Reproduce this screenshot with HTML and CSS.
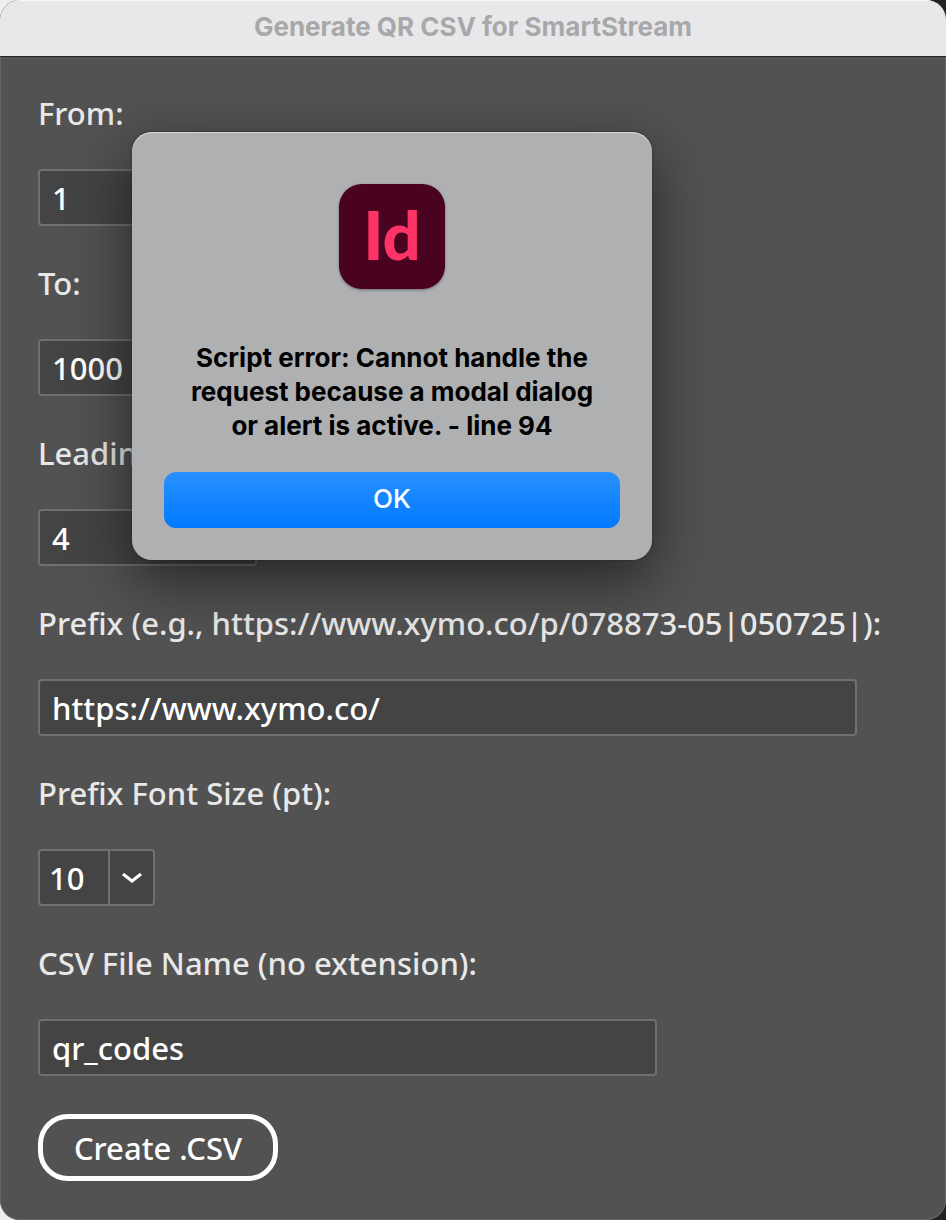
FILE: index.html
```html
<!DOCTYPE html>
<html lang="en">
<head>
    <meta charset="UTF-8">
    <meta name="viewport" content="width=device-width, initial-scale=1.0">
    <title>Generate QR CSV for SmartStream</title>
    <link rel="stylesheet" href="styles.css">
</head>
<body>
    <div class="window">
        <!-- Title Bar -->
        <header class="titlebar">
            <h1>Generate QR CSV for SmartStream</h1>
        </header>

        <!-- Form -->
        <form class="form">
            <div class="field">
                <label for="from">From:</label>
                <input class="short" type="text" id="from" value="1">
            </div>
            <div class="field">
                <label for="to">To:</label>
                <input class="short" type="text" id="to" value="1000">
            </div>
            <div class="field">
                <label for="zeros">Leading Zeros:</label>
                <input class="short" type="text" id="zeros" value="4">
            </div>
            <div class="field">
                <label for="prefix">Prefix (e.g., https://www.xymo.co/p/078873-05|050725|):</label>
                <input class="long" type="text" id="prefix" value="https://www.xymo.co/">
            </div>
            <div class="field">
                <label for="font-size">Prefix Font Size (pt):</label>
                <div class="dropdown">
                    <select id="font-size">
                        <option>8</option>
                        <option selected>10</option>
                        <option>12</option>
                    </select>
                    <span class="arrow">
                        <svg width="20" height="12" viewBox="0 0 20 12" fill="none" stroke="#fff" stroke-width="3">
                            <path d="M1 2 L10 9 L19 2"/>
                        </svg>
                    </span>
                </div>
            </div>
            <div class="field">
                <label for="file-name">CSV File Name (no extension):</label>
                <input class="medium" type="text" id="file-name" value="qr_codes">
            </div>
            <button class="create" type="button">Create .CSV</button>
        </form>

        <!-- Error Alert -->
        <div class="alert" role="alertdialog" aria-labelledby="alert-text">
            <div class="app-icon">Id</div>
            <p id="alert-text">Script error: Cannot handle the request because a modal dialog or alert is active. - line 94</p>
            <button class="ok" type="button">OK</button>
        </div>
    </div>
</body>
</html>
```
FILE: styles.css
```css
/* General Reset */
* {
    margin: 0;
    padding: 0;
    box-sizing: border-box;
}

body {
    min-height: 100vh;
    display: flex;
    background: linear-gradient(to right, #eeeeee 50%, #222222 50%);
    font-family: "Noto Sans", sans-serif;
    font-size: 31px;
    font-weight: 500;
    color: #e8e8e8;
}

.window {
    position: relative;
    flex: 1;
    background: #525252;
    border-radius: 20px;
    overflow: hidden;
    box-shadow: inset 0 0 0 1px #666666;
}

/* Title Bar */
.titlebar {
    height: 57px;
    background: #e8e8ea;
    border-top: 1px solid #f8f8f8;
    border-bottom: 1px solid #252525;
    text-align: center;
}

.titlebar h1 {
    font-family: Inter, sans-serif;
    font-size: 26px;
    font-weight: 700;
    line-height: 52px;
    color: #a8a8aa;
}

/* Form */
.form {
    display: flex;
    flex-direction: column;
    align-items: flex-start;
    gap: 38px;
    padding: 36px 38px;
}

.field {
    display: flex;
    flex-direction: column;
    align-items: flex-start;
    gap: 36px;
    width: 100%;
}

.field label {
    line-height: 39px;
    white-space: nowrap;
}

.form .field:first-child {
    padding-top: 1px;
}

.field input,
.field select {
    height: 57px;
    max-width: 100%;
    border: 2px solid #707070;
    border-radius: 4px;
    background: #444444;
    color: #ffffff;
    font: inherit;
    padding: 0 12px;
}

.field .short {
    width: 219px;
}

.field .medium {
    width: 619px;
}

.field .long {
    width: 819px;
}

/* Dropdown */
.dropdown {
    display: grid;
    width: 117px;
}

.dropdown select {
    grid-area: 1 / 1;
    appearance: none;
    padding: 0 9px;
}

.arrow {
    grid-area: 1 / 1;
    justify-self: end;
    display: flex;
    align-items: center;
    justify-content: center;
    width: 47px;
    padding-right: 2px;
    border-left: 2px solid #707070;
    pointer-events: none;
}

/* Buttons */
.create {
    width: 240px;
    height: 67px;
    border: 5px solid #ffffff;
    border-radius: 30px;
    background: transparent;
    color: #ffffff;
    font: inherit;
}

/* Alert */
.alert {
    position: absolute;
    top: 132px;
    left: 132px;
    width: 520px;
    display: flex;
    flex-direction: column;
    align-items: center;
    padding: 52px 32px 32px;
    border-radius: 20px;
    background: #afb0b2;
    font-family: Inter, sans-serif;
    font-size: 26px;
    box-shadow: inset 0 1px 1px #d8d8d8, 0 0 2px #222222, 0 20px 60px rgba(0, 0, 0, 0.55);
}

.app-icon {
    width: 106px;
    height: 105px;
    border-radius: 23px;
    background: #49021f;
    box-shadow: 0 1px 3px rgba(0, 0, 0, 0.4);
    color: #ff3366;
    font-family: Lato, sans-serif;
    font-size: 67px;
    font-weight: 900;
    line-height: 100px;
    text-align: center;
}

.alert p {
    margin: 52px 0 29px;
    padding: 0 16px;
    color: #000000;
    font-weight: 700;
    line-height: 34px;
    text-align: center;
}

.ok {
    width: 100%;
    height: 56px;
    padding-bottom: 4px;
    border: none;
    border-radius: 12px;
    background: linear-gradient(#2a90ff, #0079ff);
    color: #ffffff;
    font: inherit;
    font-weight: 500;
}
```
